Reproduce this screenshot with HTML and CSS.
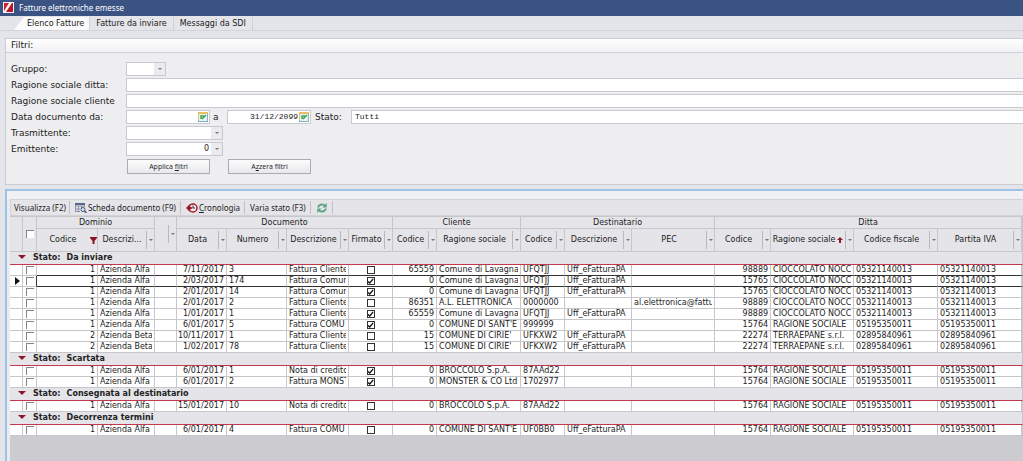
FILE: index.html
```html
<!DOCTYPE html>
<html lang="it">
<head>
<meta charset="utf-8">
<title>Fatture elettroniche emesse</title>
<link rel="stylesheet" href="styles.css">
</head>
<body>
<header class="titlebar">
  <svg class="logo" viewBox="0 0 11 11" aria-hidden="true"><rect width="11" height="11" fill="#f8f4f5"/><path d="M1 1h5L1 9z" fill="#d3202f"/><path d="M10 1v9H3L9 1z" fill="#b5182a"/></svg>
  <h1>Fatture elettroniche emesse</h1>
</header>
<nav class="tabs" role="tablist">
  <button class="tab active" role="tab" aria-selected="true">Elenco Fatture</button>
  <button class="tab" role="tab" aria-selected="false">Fatture da inviare</button>
  <button class="tab" role="tab" aria-selected="false">Messaggi da SDI</button>
</nav>
<main>
<section class="filters">
  <h2>Filtri:</h2>
  <form class="form">
    <label for="gruppo">Gruppo:</label>
    <div class="line"><span class="combo small"><input id="gruppo"><button type="button" class="drop" aria-label="Apri gruppo"></button></span></div>
    <label for="ditta">Ragione sociale ditta:</label>
    <div class="line"><input id="ditta" class="box grow"></div>
    <label for="cliente">Ragione sociale cliente</label>
    <div class="line"><input id="cliente" class="box grow"></div>
    <label for="da">Data documento da:</label>
    <div class="line">
      <span class="date"><input id="da"><button type="button" class="cal" aria-label="Calendario"><svg viewBox="0 0 10 10"><rect x=".5" y=".5" width="9" height="9" fill="#e8f3f6" stroke="#82b3bd"/><path d="M0 0h10v2H1v6H0z" fill="#e9bd62"/><path d="M3 7V4h3M4 7l4-4" fill="none" stroke="#42a557" stroke-width="1.500"/></svg></button></span>
      <label class="to" for="al">a</label>
      <span class="date"><input id="al" value="31/12/2099"><button type="button" class="cal" aria-label="Calendario"><svg viewBox="0 0 10 10"><rect x=".5" y=".5" width="9" height="9" fill="#e8f3f6" stroke="#82b3bd"/><path d="M0 0h10v2H1v6H0z" fill="#e9bd62"/><path d="M3 7V4h3M4 7l4-4" fill="none" stroke="#42a557" stroke-width="1.500"/></svg></button></span>
      <label class="state" for="stato">Stato:</label>
      <input id="stato" class="box grow" value="Tutti">
    </div>
    <label for="tras">Trasmittente:</label>
    <div class="line"><span class="combo"><input id="tras"><button type="button" class="drop" aria-label="Apri trasmittente"></button></span></div>
    <label for="emit">Emittente:</label>
    <div class="line"><span class="combo"><input id="emit" value="0"><button type="button" class="drop" aria-label="Apri emittente"></button></span></div>
    <div class="actions"><button type="button">Applica <u>f</u>iltri</button><button type="button">A<u>z</u>zera filtri</button></div>
  </form>
</section>
<section class="list">
  <div class="toolbar">
    <button>Visualizza (F2)</button>
    <button><svg viewBox="0 0 12 10"><path d="M.5 9V.5h9V4M.5 3h9M3.500 3v6M6.500 3v2M.5 6H5M.5 8.500H5" fill="none" stroke="#8a91a8"/><path d="M0 0h10v2H0z" fill="#5c6688"/><circle cx="8" cy="6.500" r="2" fill="#dfe9f2" stroke="#485579"/><path d="M9.500 8l2 2" stroke="#485579" stroke-width="1.500"/></svg>Scheda documento (F9)</button>
    <button><svg viewBox="0 0 12 10"><circle cx="7" cy="5" r="4" fill="#f6eded" stroke="#a11f2c" stroke-width="1.500"/><path d="M7 2.500V5H9" fill="none" stroke="#333"/><path d="M0 5l4-4v2.500l3 1.500-3 1.500V9z" fill="#a11222"/></svg><span><u>C</u>ronologia</span></button>
    <button>Varia stato (F3)</button>
    <button aria-label="Aggiorna"><svg viewBox="0 0 12 10"><path d="M2 4.500Q3 1.500 6 1.500q2 0 3 1.200M10 5.500Q9 8.500 6 8.500q-2 0-3-1.200" fill="none" stroke="#5fa585" stroke-width="1.800"/><path d="M10.800 0v4.500H6.500zM1.200 10V5.500h4.300z" fill="#5fa585"/></svg></button>
  </div>
  <table>
    <colgroup><col class="w13"><col class="w14"><col class="w61"><col class="w57"><col class="w22"><col class="w50"><col class="w60"><col class="w62"><col class="w44"><col class="w44"><col class="w84"><col class="w44"><col class="w67"><col class="w83"><col class="w56"><col class="w83"><col class="w84"><col class="w84"><col></colgroup>
    <thead>
      <tr class="bands"><th rowspan="2"></th><th rowspan="2"><input type="checkbox" class="pick" aria-label="Seleziona tutte"></th><th colspan="2">Dominio</th><th rowspan="2"><div class="head"><span></span><button class="flt" aria-label="Filtro"></button></div></th><th colspan="4">Documento</th><th colspan="2">Cliente</th><th colspan="3">Destinatario</th><th colspan="4">Ditta</th><th rowspan="2"></th></tr>
      <tr class="cols">
        <th><div class="head"><span>Codice</span><button class="flt on" aria-label="Filtro attivo"><svg viewBox="0 0 7 7"><path d="M0 0h7v1L4.500 4v3h-2V4L0 1z" fill="#8d1626"/></svg></button></div></th>
        <th><div class="head"><span>Descrizi...</span><button class="flt" aria-label="Filtro"></button></div></th>
        <th><div class="head"><span>Data</span><button class="flt" aria-label="Filtro"></button></div></th>
        <th><div class="head"><span>Numero</span><button class="flt" aria-label="Filtro"></button></div></th>
        <th><div class="head"><span>Descrizione</span><button class="flt" aria-label="Filtro"></button></div></th>
        <th><div class="head"><span>Firmato</span><button class="flt" aria-label="Filtro"></button></div></th>
        <th><div class="head"><span>Codice</span><button class="flt" aria-label="Filtro"></button></div></th>
        <th><div class="head"><span>Ragione sociale</span><button class="flt" aria-label="Filtro"></button></div></th>
        <th><div class="head"><span>Codice</span><button class="flt" aria-label="Filtro"></button></div></th>
        <th><div class="head"><span>Descrizione</span><button class="flt" aria-label="Filtro"></button></div></th>
        <th><div class="head"><span>PEC</span><button class="flt" aria-label="Filtro"></button></div></th>
        <th><div class="head"><span>Codice</span><button class="flt" aria-label="Filtro"></button></div></th>
        <th><div class="head"><span>Ragione sociale</span><svg class="sort" viewBox="0 0 6 6"><path d="M3 0l3 3H4v3H2V3H0z" fill="#8d1626"/></svg><button class="flt" aria-label="Filtro"></button></div></th>
        <th><div class="head"><span>Codice fiscale</span><button class="flt" aria-label="Filtro"></button></div></th>
        <th><div class="head"><span>Partita IVA</span><button class="flt" aria-label="Filtro"></button></div></th>
      </tr>
    </thead>
    <tbody>
      <tr class="group"><th colspan="19"><span>Stato:</span>Da inviare</th></tr>
      <tr><td></td><td><input type="checkbox" class="pick" aria-label="Seleziona"></td><td>1</td><td>Azienda Alfa</td><td></td><td>7/11/2017</td><td>3</td><td>Fattura Cliente</td><td><input type="checkbox" class="signed" aria-label="Firmato"></td><td>65559</td><td>Comune di Lavagna</td><td>UFQTJJ</td><td>Uff_eFatturaPA</td><td></td><td>98889</td><td>CIOCCOLATO NOCC</td><td>05321140013</td><td>05321140013</td><td></td></tr>
      <tr class="current"><td></td><td><input type="checkbox" class="pick" aria-label="Seleziona"></td><td>1</td><td>Azienda Alfa</td><td></td><td>2/03/2017</td><td>174</td><td>Fattura Comun</td><td><input type="checkbox" class="signed" aria-label="Firmato" checked></td><td>0</td><td>Comune di Lavagna</td><td>UFQTJJ</td><td>Uff_eFatturaPA</td><td></td><td>15765</td><td>CIOCCOLATO NOCC</td><td>05321140013</td><td>05321140013</td><td></td></tr>
      <tr><td></td><td><input type="checkbox" class="pick" aria-label="Seleziona"></td><td>1</td><td>Azienda Alfa</td><td></td><td>2/01/2017</td><td>14</td><td>Fattura Comun</td><td><input type="checkbox" class="signed" aria-label="Firmato" checked></td><td>0</td><td>Comune di Lavagna</td><td>UFQTJJ</td><td>Uff_eFatturaPA</td><td></td><td>15765</td><td>CIOCCOLATO NOCC</td><td>05321140013</td><td>05321140013</td><td></td></tr>
      <tr><td></td><td><input type="checkbox" class="pick" aria-label="Seleziona"></td><td>1</td><td>Azienda Alfa</td><td></td><td>2/01/2017</td><td>2</td><td>Fattura Cliente</td><td><input type="checkbox" class="signed" aria-label="Firmato"></td><td>86351</td><td>A.L. ELETTRONICA</td><td>0000000</td><td></td><td>al.elettronica@fattur</td><td>98889</td><td>CIOCCOLATO NOCC</td><td>05321140013</td><td>05321140013</td><td></td></tr>
      <tr><td></td><td><input type="checkbox" class="pick" aria-label="Seleziona"></td><td>1</td><td>Azienda Alfa</td><td></td><td>1/01/2017</td><td>1</td><td>Fattura Cliente</td><td><input type="checkbox" class="signed" aria-label="Firmato" checked></td><td>65559</td><td>Comune di Lavagna</td><td>UFQTJJ</td><td>Uff_eFatturaPA</td><td></td><td>98889</td><td>CIOCCOLATO NOCC</td><td>05321140013</td><td>05321140013</td><td></td></tr>
      <tr><td></td><td><input type="checkbox" class="pick" aria-label="Seleziona"></td><td>1</td><td>Azienda Alfa</td><td></td><td>6/01/2017</td><td>5</td><td>Fattura COMU</td><td><input type="checkbox" class="signed" aria-label="Firmato" checked></td><td>0</td><td>COMUNE DI SANT'E</td><td>999999</td><td></td><td></td><td>15764</td><td>RAGIONE SOCIALE</td><td>05195350011</td><td>05195350011</td><td></td></tr>
      <tr><td></td><td><input type="checkbox" class="pick" aria-label="Seleziona"></td><td>2</td><td>Azienda Beta</td><td></td><td>10/11/2017</td><td>1</td><td>Fattura Cliente</td><td><input type="checkbox" class="signed" aria-label="Firmato"></td><td>15</td><td>COMUNE DI CIRIE'</td><td>UFKXW2</td><td>Uff_eFatturaPA</td><td></td><td>22274</td><td>TERRAEPANE s.r.l.</td><td>02895840961</td><td>02895840961</td><td></td></tr>
      <tr><td></td><td><input type="checkbox" class="pick" aria-label="Seleziona"></td><td>2</td><td>Azienda Beta</td><td></td><td>1/02/2017</td><td>78</td><td>Fattura Cliente</td><td><input type="checkbox" class="signed" aria-label="Firmato"></td><td>15</td><td>COMUNE DI CIRIE'</td><td>UFKXW2</td><td>Uff_eFatturaPA</td><td></td><td>22274</td><td>TERRAEPANE s.r.l.</td><td>02895840961</td><td>02895840961</td><td></td></tr>
      <tr class="group"><th colspan="19"><span>Stato:</span>Scartata</th></tr>
      <tr><td></td><td><input type="checkbox" class="pick" aria-label="Seleziona"></td><td>1</td><td>Azienda Alfa</td><td></td><td>6/01/2017</td><td>1</td><td>Nota di credito</td><td><input type="checkbox" class="signed" aria-label="Firmato" checked></td><td>0</td><td>BROCCOLO S.p.A.</td><td>87AAd22</td><td></td><td></td><td>15764</td><td>RAGIONE SOCIALE</td><td>05195350011</td><td>05195350011</td><td></td></tr>
      <tr><td></td><td><input type="checkbox" class="pick" aria-label="Seleziona"></td><td>1</td><td>Azienda Alfa</td><td></td><td>6/01/2017</td><td>2</td><td>Fattura MONST</td><td><input type="checkbox" class="signed" aria-label="Firmato" checked></td><td>0</td><td>MONSTER &amp; CO Ltd</td><td>1702977</td><td></td><td></td><td>15764</td><td>RAGIONE SOCIALE</td><td>05195350011</td><td>05195350011</td><td></td></tr>
      <tr class="group"><th colspan="19"><span>Stato:</span>Consegnata al destinatario</th></tr>
      <tr><td></td><td><input type="checkbox" class="pick" aria-label="Seleziona"></td><td>1</td><td>Azienda Alfa</td><td></td><td>15/01/2017</td><td>10</td><td>Nota di credito</td><td><input type="checkbox" class="signed" aria-label="Firmato"></td><td>0</td><td>BROCCOLO S.p.A.</td><td>87AAd22</td><td></td><td></td><td>15764</td><td>RAGIONE SOCIALE</td><td>05195350011</td><td>05195350011</td><td></td></tr>
      <tr class="group"><th colspan="19"><span>Stato:</span>Decorrenza termini</th></tr>
      <tr><td></td><td><input type="checkbox" class="pick" aria-label="Seleziona"></td><td>1</td><td>Azienda Alfa</td><td></td><td>6/01/2017</td><td>4</td><td>Fattura COMU</td><td><input type="checkbox" class="signed" aria-label="Firmato"></td><td>0</td><td>COMUNE DI SANT'E</td><td>UF0BB0</td><td>Uff_eFatturaPA</td><td></td><td>15764</td><td>RAGIONE SOCIALE</td><td>05195350011</td><td>05195350011</td><td></td></tr>
    </tbody>
  </table>
</section>
</main>
</body>
</html>
```
FILE: styles.css
```css
* { box-sizing: border-box; }
html, body { height: 100%; }
body {
  margin: 0;
  display: flex;
  flex-direction: column;
  overflow: hidden;
  background: #e4e5ea;
  color: #222;
  font: 8px/10px "DejaVu Sans", sans-serif;
}
h1, h2 { margin: 0; font-weight: 400; }
button, input { font: inherit; color: inherit; margin: 0; padding: 0; border: 0; border-radius: 0; background: none; min-width: 0; }
svg { display: block; }

.titlebar { display: flex; align-items: center; gap: 5px; height: 16px; flex: none; padding: 0 3px 1px; background: #3b5383; color: #fff; }
.titlebar h1 { font: 8px/12px "Noto Sans", sans-serif; }
.logo { width: 11px; height: 11px; }

.tabs { display: flex; flex: none; height: 14px; padding: 1px 0 0 14px; }
.tab { padding: 0 6px; border-right: 1px solid #cfcfd5; line-height: 12px; }
.tab.active { padding: 0 5px 0 13px; background: #fbfbfc; clip-path: polygon(10px 0, 100% 0, 100% 100%, 0 100%); }

main { flex: 1; display: flex; flex-direction: column; gap: 4px; min-height: 0; padding: 7px 0 0 5px; border-top: 1px solid #d3d4da; }

.filters { flex: none; border: solid #cbccd2; border-width: 1px 0 1px 1px; background: #eeeef1; }
.filters h2 { height: 14px; padding-left: 5px; background: linear-gradient(#fff, #f1f1f4); border-bottom: 1px solid #d0d0d6; font-size: 9px; line-height: 13px; }
.form { display: grid; grid-template-columns: 115px 1fr; grid-auto-rows: 14px; row-gap: 2px; padding: 9px 0 12px 5px; font-size: 9px; line-height: 14px; }
.line { display: flex; }
.box, .combo, .date { border: 1px solid #c9cacf; background: #fff; }
.grow { flex: 1; padding: 0 3px; border-right: 0; }
.combo, .date { display: flex; }
.combo { width: 97px; }
.combo.small { width: 40px; }
.combo input { flex: 1; width: 0; padding-right: 2px; text-align: right; }
.combo input, .date input, .box { font: 8px/12px "Liberation Mono", monospace; }
#emit { font-family: "DejaVu Sans", sans-serif; }
.drop { display: grid; place-items: center; width: 11px; background: #ebebef; }
.drop::before, .flt:not(.on)::before { content: ""; border: solid transparent; border-width: 2px 2px 0; border-top-color: #777; }
.date { width: 84px; }
.date input { flex: 1; width: 0; text-align: right; }
.cal { display: grid; place-items: center; width: 12px; }
.cal svg { width: 10px; height: 10px; }
.to { width: 17px; padding-left: 3px; }
.state { width: 40px; padding-left: 4px; }
.actions { grid-column: 2; display: flex; gap: 18px; padding-left: 1px; height: 16px; padding-top: 1px; }
.actions button { width: 83px; border: 1px solid #aaacb2; background: linear-gradient(#fcfcfd, #e9e9ed); font: 7px/12px "Open Sans", sans-serif; }

.list { flex: 1; min-height: 0; overflow: hidden; padding: 8px 0 0 3px; display: flex; flex-direction: column; border: solid #9dc2e4; border-width: 2px 0 0 2px; background: linear-gradient(#f0f1f5, #f0f1f5) top / 100% 8px no-repeat, linear-gradient(#e9ebf1, #e9ebf1) left / 3px 100% no-repeat, #ccccd0; }
.toolbar { display: flex; align-items: center; height: 17px; flex: none; border: 1px solid #d2d2d7; border-right: 0; background: #e5e5e9; font: 8px/12px "Noto Sans", sans-serif; }
.toolbar button { display: flex; align-items: center; gap: 1px; height: 13px; padding: 0 4px 0 5px; border-right: 1px solid #c3bfc4; }
.toolbar button:first-child { padding: 0 3px; }
.toolbar svg { width: 12px; height: 10px; }

table { width: 100%; table-layout: fixed; border-collapse: separate; border-spacing: 0; }
.w13 { width: 13px; } .w14 { width: 14px; } .w22 { width: 22px; } .w44 { width: 44px; }
.w50 { width: 50px; } .w56 { width: 56px; } .w57 { width: 57px; } .w60 { width: 60px; }
.w61 { width: 61px; } .w62 { width: 62px; } .w67 { width: 67px; } .w83 { width: 83px; } .w84 { width: 84px; }
th, td { padding: 0; border: solid #c6c6cb; border-width: 0 1px 1px 0; font-weight: 400; white-space: nowrap; overflow: hidden; }
thead th { background: #e5e5e9; }
.bands th { height: 13px; border-top: 1px solid #c6c6cb; line-height: 11px; }
.cols th { height: 23px; }
.head { display: flex; align-items: center; height: 22px; }
.head span { flex: 1; min-width: 0; text-align: center; }
.flt { display: grid; place-items: center; width: 8px; height: 18px; flex: none; border-left: 1px solid #b9b9bf; }
.flt svg { width: 7px; height: 7px; }
.flt.on { border-left: 0; }
.sort { width: 6px; height: 6px; margin-right: 2px; flex: none; }

td { height: 11px; padding: 0 2px; background: #fff; line-height: 10px; overflow: clip; overflow-clip-margin: content-box; }
td:nth-child(3), td:nth-child(6), td:nth-child(10), td:nth-child(15) { text-align: right; }
td:nth-child(6) { padding: 0 2px 0 0; }
.group th { height: 13px; padding-left: 22px; text-align: left; font-weight: 700; line-height: 12px; background: #e5e5e9; border-bottom-color: #c2384c; }
.group span { margin-right: 6px; }
.group th::before { content: ""; display: inline-block; margin: 0 7px 1px -14px; border: solid transparent; border-width: 4px 4px 0; border-top-color: #8d1626; }
input[type=checkbox] { appearance: none; display: block; width: 8px; height: 8px; margin: 0 auto; background: #fff; }
.pick { border: solid #85858a; border-width: 1px 0 0 1px; }
.signed { border: 1px solid #333; }
.signed:checked::before { content: ""; display: block; width: 6px; height: 6px; background: #111; clip-path: polygon(0 40%, 35% 65%, 90% 5%, 100% 25%, 38% 100%, 0 65%); }
tr:has(+ .current) td:nth-child(n+3), .current td:nth-child(n+3) { border-bottom-color: #333; }
.current td:nth-child(2) { border-right-color: #333; }
.current td:first-child::before { content: ""; display: block; width: 0; margin-left: 3px; border: solid transparent; border-width: 4px 0 4px 5px; border-left-color: #111; }
```
